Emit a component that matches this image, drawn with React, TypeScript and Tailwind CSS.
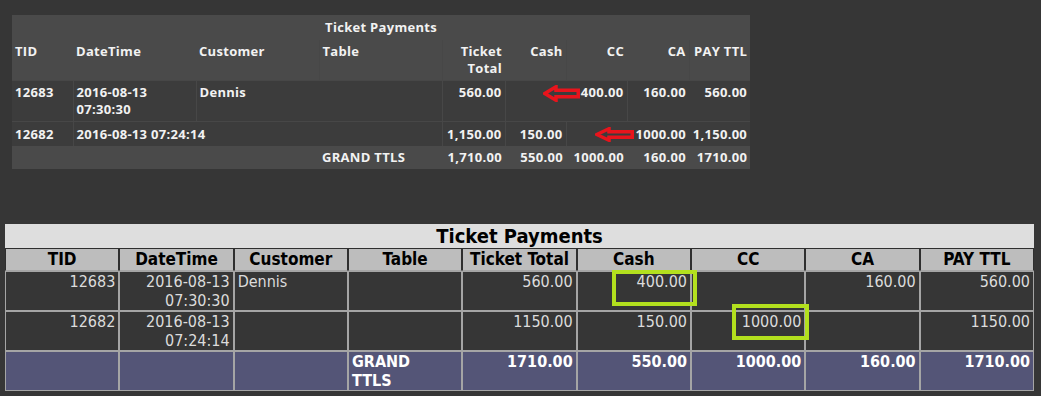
import React from 'react';

type Row = {
  tid: string;
  date: string;
  customer: string;
  ticket: string;
  cash: string;
  cc: string;
  ca: string;
  pay: string;
};

const rows: Row[] = [
  { tid: '12683', date: '2016-08-13 07:30:30', customer: 'Dennis', ticket: '560.00', cash: '', cc: '400.00', ca: '160.00', pay: '560.00' },
  { tid: '12682', date: '2016-08-13 07:24:14', customer: '', ticket: '1,150.00', cash: '150.00', cc: '1000.00', ca: '', pay: '1,150.00' },
];

const bottomRows = [
  { tid: '12683', date: ['2016-08-13', '07:30:30'], customer: 'Dennis', ticket: '560.00', cash: '400.00', cc: '', ca: '160.00', pay: '560.00' },
  { tid: '12682', date: ['2016-08-13', '07:24:14'], customer: '', ticket: '1150.00', cash: '150.00', cc: '1000.00', ca: '', pay: '1150.00' },
];

function RedArrow({ w, h }: { w: number; h: number }) {
  const s = 3.5;
  const mid = h / 2;
  const head = Math.round(w * 0.36);
  const shaft = h * 0.27 - s / 2 + 0.5;
  return (
    <svg width={w} height={h} viewBox={`0 0 ${w} ${h}`}>
      <path
        d={`M${s / 2} ${mid} L${head} ${s / 2} L${head} ${mid - shaft} L${w - s / 2} ${mid - shaft} L${w - s / 2} ${mid + shaft} L${head} ${mid + shaft} L${head} ${h - s / 2} Z`}
        fill="none"
        stroke="#e8141c"
        strokeWidth={s}
        strokeLinejoin="miter"
      />
    </svg>
  );
}

function TopTable() {
  const line = 'border-[#474747]';
  return (
    <div className="relative w-[738px]">
      <table
        className="w-[738px] table-fixed border-collapse text-[13px] tracking-[0.3px] leading-[17px] font-bold text-[#f2f2f2]"
        style={{ fontFamily: '"Open Sans", "Noto Sans", sans-serif' }}
      >
        <colgroup>
          <col className="w-[61px]" />
          <col className="w-[123px]" />
          <col className="w-[123px]" />
          <col className="w-[123px]" />
          <col className="w-[63px]" />
          <col className="w-[61px]" />
          <col className="w-[61px]" />
          <col className="w-[62px]" />
          <col className="w-[61px]" />
        </colgroup>
        <tbody>
          <tr className="bg-[#4a4a4a]">
            <td colSpan={9} className="px-[3px] pt-[4px] pb-[4px] text-center">Ticket Payments</td>
          </tr>
          <tr className="bg-[#4a4a4a] align-top">
            <td className="px-[3px] py-[3px] h-[40px]">TID</td>
            <td className="px-[3px] py-[3px]">DateTime</td>
            <td className="px-[3px] py-[3px]">Customer</td>
            <td className={`px-[3px] py-[3px] border-l ${line}`}>Table</td>
            <td className={`px-[3px] py-[3px] text-right border-l ${line}`}>Ticket Total</td>
            <td className="px-[3px] py-[3px] text-right">Cash</td>
            <td className={`px-[3px] py-[3px] text-right border-l ${line}`}>CC</td>
            <td className="px-[3px] py-[3px] text-right">CA</td>
            <td className={`px-[3px] py-[3px] text-right border-l ${line}`}>PAY TTL</td>
          </tr>
          <tr className={`bg-[#3c3c3c] align-top border-t ${line}`}>
            <td className={`px-[3px] py-[3px] h-[40px] border-r ${line}`}>{rows[0].tid}</td>
            <td className={`px-[3px] py-[3px] border-r ${line}`}>{rows[0].date}</td>
            <td className="px-[3px] py-[3px]">{rows[0].customer}</td>
            <td className={`px-[3px] py-[3px] border-r ${line}`}></td>
            <td className={`px-[3px] py-[3px] text-right border-r ${line}`}>{rows[0].ticket}</td>
            <td className="px-[3px] py-[3px] text-right">{rows[0].cash}</td>
            <td className={`px-[3px] py-[3px] text-right border-r ${line}`}>{rows[0].cc}</td>
            <td className="px-[3px] py-[3px] text-right">{rows[0].ca}</td>
            <td className="px-[3px] py-[3px] text-right">{rows[0].pay}</td>
          </tr>
          <tr className={`bg-[#3c3c3c] align-top border-t ${line}`}>
            <td className={`px-[3px] pt-[4px] pb-[3px] border-r ${line}`}>{rows[1].tid}</td>
            <td className="px-[3px] pt-[4px] pb-[3px] whitespace-nowrap">{rows[1].date}</td>
            <td className="px-[3px] pt-[4px] pb-[3px]"></td>
            <td className={`px-[3px] pt-[4px] pb-[3px] border-r ${line}`}></td>
            <td className={`px-[3px] pt-[4px] pb-[3px] text-right border-r ${line}`}>{rows[1].ticket}</td>
            <td className={`px-[3px] pt-[4px] pb-[3px] text-right border-r ${line}`}>{rows[1].cash}</td>
            <td className="px-[3px] pt-[4px] pb-[3px] text-right"></td>
            <td className="px-[3px] pt-[4px] pb-[3px] text-right">{rows[1].cc}</td>
            <td className="px-[3px] pt-[4px] pb-[3px] text-right">{rows[1].pay}</td>
          </tr>
          <tr className="bg-[#4a4a4a]">
            <td className="px-[3px] py-[3px]"></td>
            <td className="px-[3px] py-[3px]"></td>
            <td className="px-[3px] py-[3px]"></td>
            <td className="px-[3px] py-[3px]">GRAND TTLS</td>
            <td className="px-[3px] py-[3px] text-right">1,710.00</td>
            <td className="px-[3px] py-[3px] text-right">550.00</td>
            <td className="px-[3px] py-[3px] text-right">1000.00</td>
            <td className="px-[3px] py-[3px] text-right">160.00</td>
            <td className="px-[3px] py-[3px] text-right">1710.00</td>
          </tr>
        </tbody>
      </table>
      <div className="absolute left-[531px] top-[70px]">
        <RedArrow w={37} h={17} />
      </div>
      <div className="absolute left-[583px] top-[112px]">
        <RedArrow w={39} h={15} />
      </div>
    </div>
  );
}

function BottomTable() {
  const th = 'border border-[#2f2f2f] border-b-[#a5a5a5] bg-[#bdbdbd] text-black font-bold text-center text-[17px] px-[2px] h-[23px] leading-[19px]';
  const cell = 'border border-[#a5a5a5] px-[3px] pt-0 align-top h-[40px] leading-[19px]';
  const td = `${cell} text-right`;
  const tdl = `${cell} text-left`;
  const gt = `${cell} text-right font-bold text-white`;
  const gtl = `${cell} text-left font-bold text-white leading-[18px]`;
  return (
    <div className="relative w-[1029px]">
      <table
        className="w-[1029px] table-fixed border-separate border-spacing-0 text-[16px] text-[#dcdcdc]"
        style={{ fontFamily: '"DejaVu Sans Condensed", "DejaVu Sans", Verdana, sans-serif', fontStretch: 'condensed' }}
      >
        <tbody>
          <tr>
            <td colSpan={9} className="bg-[#dedede] text-black font-bold text-center text-[20px] leading-[24px] h-[24px]">
              Ticket Payments
            </td>
          </tr>
          <tr>
            <th className={th}>TID</th>
            <th className={th}>DateTime</th>
            <th className={th}>Customer</th>
            <th className={th}>Table</th>
            <th className={th}>Ticket Total</th>
            <th className={th}>Cash</th>
            <th className={th}>CC</th>
            <th className={th}>CA</th>
            <th className={th}>PAY TTL</th>
          </tr>
          {bottomRows.map((r) => (
            <tr key={r.tid} className="bg-[#363636]">
              <td className={td}>{r.tid}</td>
              <td className={td}>
                {r.date[0]}
                <br />
                {r.date[1]}
              </td>
              <td className={tdl}>{r.customer}</td>
              <td className={td}></td>
              <td className={td}>{r.ticket}</td>
              <td className={td}>{r.cash}</td>
              <td className={td}>{r.cc}</td>
              <td className={td}>{r.ca}</td>
              <td className={td}>{r.pay}</td>
            </tr>
          ))}
          <tr className="bg-[#545577]">
            <td className={gt}></td>
            <td className={gt}></td>
            <td className={gt}></td>
            <td className={gtl}>
              GRAND
              <br />
              TTLS
            </td>
            <td className={gt}>1710.00</td>
            <td className={gt}>550.00</td>
            <td className={gt}>1000.00</td>
            <td className={gt}>160.00</td>
            <td className={gt}>1710.00</td>
          </tr>
        </tbody>
      </table>
      <div className="absolute left-[607px] top-[46px] w-[85px] h-[36px] border-4 border-[#b3e01e]" />
      <div className="absolute left-[727px] top-[80px] w-[77px] h-[36px] border-4 border-[#b3e01e]" />
    </div>
  );
}

export default function App() {
  return (
    <div className="w-[1041px] h-[396px] bg-[#363636] overflow-hidden">
      <div className="pl-[12px] pt-[15px]">
        <TopTable />
      </div>
      <div className="pl-[5px] mt-[55px]">
        <BottomTable />
      </div>
    </div>
  );
}
